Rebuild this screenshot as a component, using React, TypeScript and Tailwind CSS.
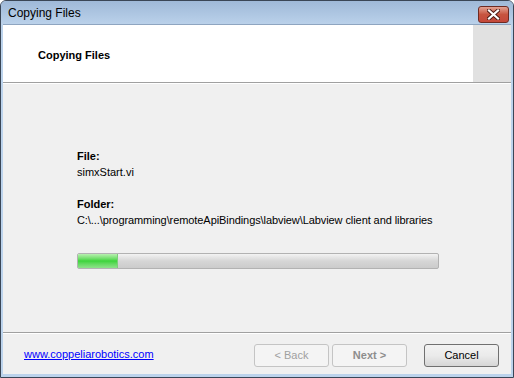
import React from "react";

export default function App() {
  const font = { fontFamily: '"Liberation Sans", Arial, sans-serif' };
  return (
    <div className="w-[514px] h-[378px] bg-white" style={font}>
      <div className="w-[514px] h-[378px] flex flex-col border border-[#3a4656] rounded-t-[6px] bg-[#bcd3ec] overflow-hidden">
        {/* Title bar */}
        <div className="h-[23px] flex items-center justify-between bg-gradient-to-b from-[#9fb9d8] to-[#bad1ea] pl-[7px] pr-[4px] shrink-0">
          <span className="text-[12px] text-black leading-none mt-[1px]">Copying Files</span>
          <div className="w-[31px] h-[17px] mt-[3px] rounded-[3px] border border-[#6e2a22] bg-gradient-to-b from-[#e2a293] via-[#c7543f] to-[#c4483a] flex items-center justify-center">
            <svg width="13" height="11" viewBox="0 0 13 11">
              <path d="M2 1.5 L11 9.5 M11 1.5 L2 9.5" stroke="#4d1a14" strokeWidth="4" strokeLinecap="square" />
              <path d="M2 1.5 L11 9.5 M11 1.5 L2 9.5" stroke="#ffffff" strokeWidth="2.2" strokeLinecap="square" />
            </svg>
          </div>
        </div>
        {/* Client area */}
        <div className="mx-[2px] mb-[3px] flex-1 flex flex-col bg-[#f0f0f0] border-t border-[#8ea5c0]">
          {/* Header */}
          <div className="h-[58px] flex bg-white border-b border-[#a0a0a0] shrink-0">
            <div className="flex-1 pl-[35px] pt-[22px] text-[11px] leading-[16px] font-bold text-black">
              Copying Files
            </div>
            <div className="w-[38px] bg-[#e1e1e1]" />
          </div>
          <div className="h-px bg-white shrink-0" />
          {/* Body */}
          <div className="flex-1 pl-[74px] pt-[64px] text-[11px] text-black leading-[16px]">
            <div className="font-bold">File:</div>
            <div>simxStart.vi</div>
            <div className="font-bold mt-[16px]">Folder:</div>
            <div className="tracking-[-0.08px]">C:\...\programming\remoteApiBindings\labview\Labview client and libraries</div>
            <div className="mt-[25px] w-[362px] h-[16px] rounded-[2px] border border-[#b2b2b2] bg-gradient-to-b from-[#f3f3f3] via-[#d6d6d6] to-[#cbcbcb] flex overflow-hidden">
              <div className="w-[40px] h-full bg-gradient-to-b from-[#b7f0b0] via-[#3ad43a] to-[#8de28a] border-r border-[#7ccd7a]" />
            </div>
          </div>
          {/* Separator */}
          <div className="h-px bg-[#a0a0a0] shrink-0" />
          <div className="h-px bg-white shrink-0" />
          {/* Footer */}
          <div className="h-[40px] flex items-start pt-[10px] shrink-0">
            <a className="ml-[21px] mt-[3px] text-[11px] text-[#0000ff] underline leading-[14px]">www.coppeliarobotics.com</a>
            <div className="ml-auto flex gap-[3px]">
              <div className="w-[75px] h-[23px] rounded-[3px] border border-[#c4c4c4] bg-[#f4f4f4] flex items-center justify-center text-[11px] text-[#a0a0a0]">&lt; Back</div>
              <div className="w-[75px] h-[23px] rounded-[3px] border border-[#c4c4c4] bg-[#f4f4f4] flex items-center justify-center text-[11px] font-bold text-[#8d8d8d]">Next &gt;</div>
            </div>
            <div className="ml-[17px] mr-[12px] w-[75px] h-[23px] rounded-[3px] border border-[#707070] bg-gradient-to-b from-[#f2f2f2] via-[#ebebeb] to-[#d6d6d6] flex items-center justify-center text-[11px] text-black">Cancel</div>
          </div>
        </div>
      </div>
    </div>
  );
}
